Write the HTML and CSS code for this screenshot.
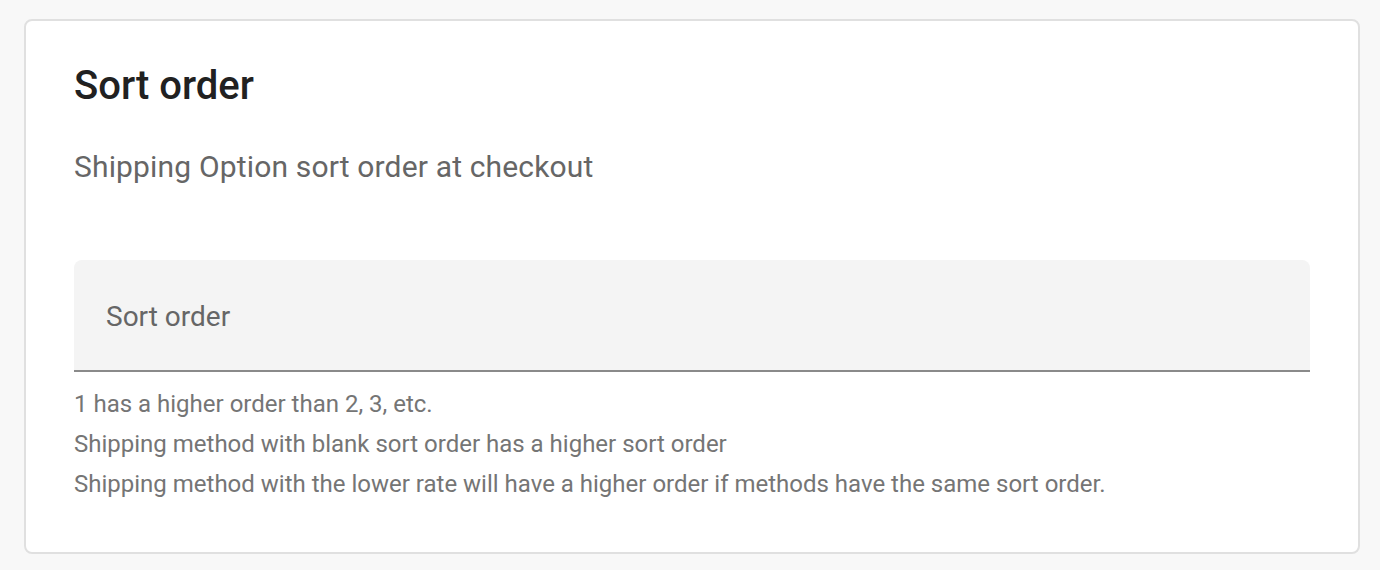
FILE: index.html
```html
<!DOCTYPE html>
<html lang="en">
<head>
    <meta charset="UTF-8">
    <meta name="viewport" content="width=device-width, initial-scale=1.0">
    <title>Sort order</title>
    <link rel="stylesheet" href="styles.css">
</head>
<body>
    <div class="card">
        <h2 class="card-title">Sort order</h2>
        <p class="card-subtitle">Shipping Option sort order at checkout</p>

        <div class="field">
            <label class="field-label" for="sortOrder">Sort order</label>
            <input type="text" id="sortOrder">
        </div>
        <div class="helper">
            <div>1 has a higher order than 2, 3, etc.</div>
            <div>Shipping method with blank sort order has a higher sort order</div>
            <div>Shipping method with the lower rate will have a higher order if methods have the same sort order.</div>
        </div>
    </div>
</body>
</html>
```

FILE: styles.css
```css
body {
    margin: 0;
    padding: 19px 20px 16px 24px;
    background-color: #f8f8f8;
    font-family: Roboto, "Liberation Sans", sans-serif;
}
.card {
    background-color: #fff;
    border: 2px solid #e0e0e0;
    border-radius: 8px;
    padding: 41px 48px 48px 48px;
}
.card-title {
    margin: 0;
    font-size: 40px;
    font-weight: 500;
    line-height: 48px;
    color: #212121;
}
.card-subtitle {
    margin: 39px 0 0 0;
    font-size: 30px;
    letter-spacing: 0.16px;
    line-height: 36px;
    color: #666;
}
.field {
    position: relative;
    margin-top: 75px;
    height: 110px;
    background-color: #f4f4f4;
    border-radius: 8px 8px 0 0;
    border-bottom: 2px solid #8a8a8a;
}
.field input {
    width: 100%;
    height: 100%;
    box-sizing: border-box;
    border: none;
    background: transparent;
    outline: none;
}
.field-label {
    position: absolute;
    left: 32px;
    top: 39px;
    font-size: 28px;
    line-height: 36px;
    color: #666;
}
.helper {
    margin-top: 12px;
    font-size: 24px;
    line-height: 40px;
    color: #757575;
}
```
